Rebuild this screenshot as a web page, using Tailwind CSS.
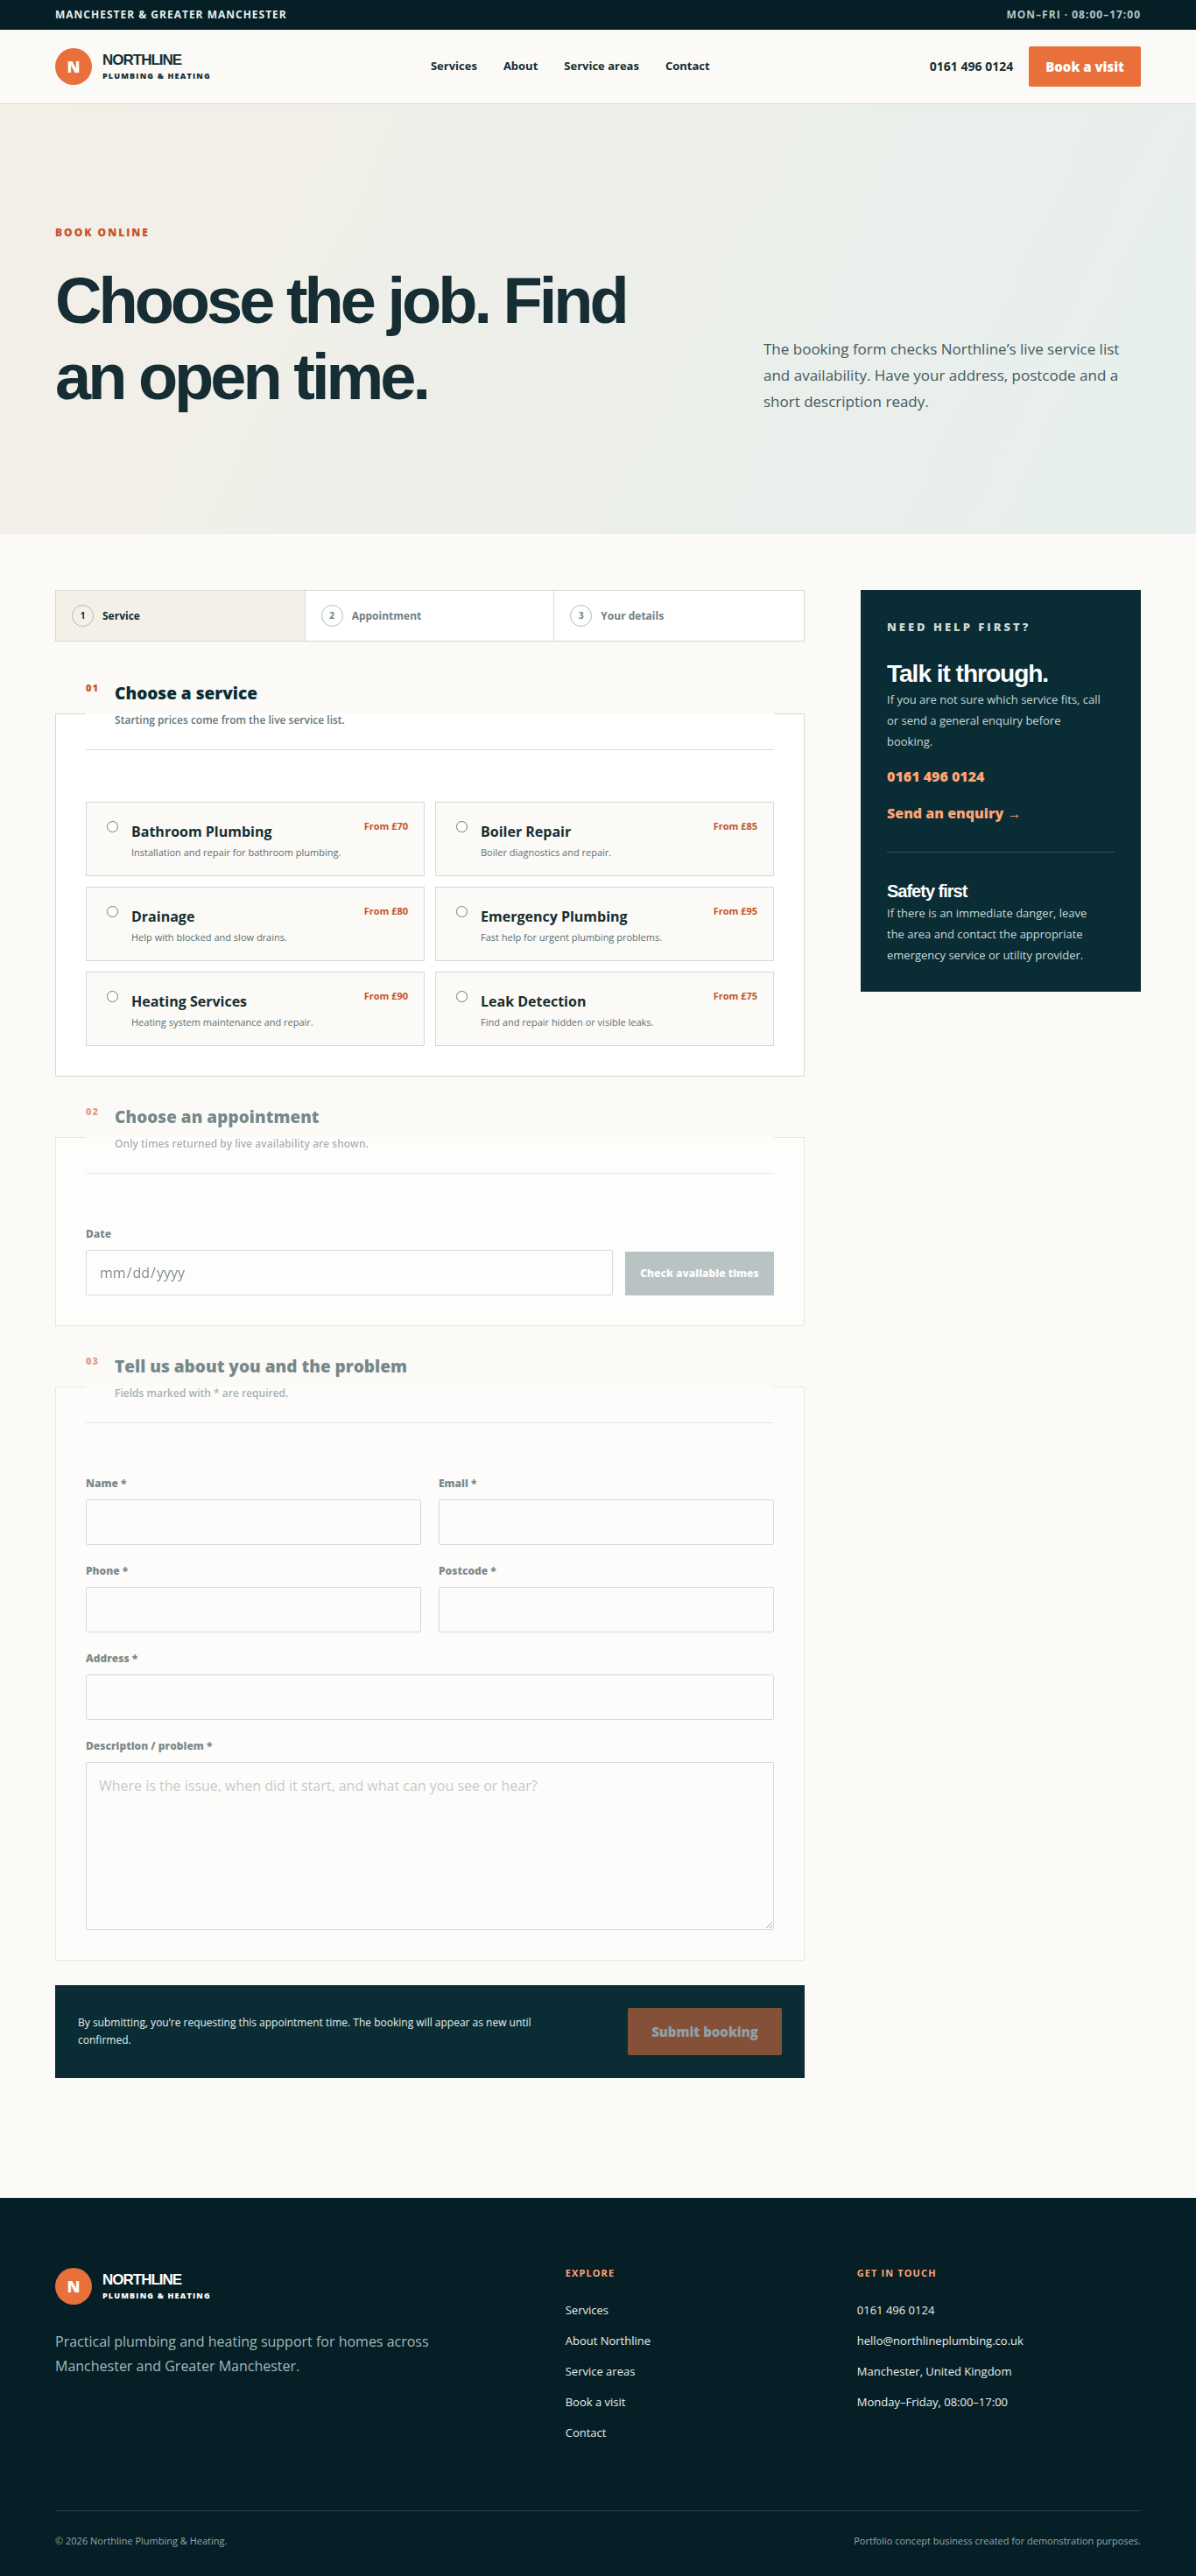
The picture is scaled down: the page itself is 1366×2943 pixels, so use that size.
<!DOCTYPE html>
<html lang="en">
<head>
    <meta charset="UTF-8">
    <meta name="viewport" content="width=device-width, initial-scale=1.0">
    <script src="https://cdn.jsdelivr.net/npm/@tailwindcss/browser@4"></script>
    <title>Book online | Northline Plumbing &amp; Heating</title>
</head>
<body class="bg-[#fbfaf6] text-[#152d33] text-base font-['Open_Sans',sans-serif]">

    <!-- Top bar -->
    <div class="bg-[#061f26]">
        <div class="max-w-[1240px] mx-auto h-[34px] flex items-center justify-between text-xs font-bold uppercase tracking-[1px]">
            <span class="text-[#e6efed]">Manchester &amp; Greater Manchester</span>
            <span class="text-[#b5c8c8]">Mon–Fri · 08:00–17:00</span>
        </div>
    </div>

    <!-- Header -->
    <header class="border-b border-[#d7dfdd]">
        <div class="max-w-[1240px] mx-auto h-[84px] flex items-center justify-between">
            <a href="#" class="flex items-center gap-3">
                <span class="size-[42px] rounded-full bg-[#e96f3b] text-white text-lg font-extrabold flex items-center justify-center">N</span>
                <span class="pt-0.5">
                    <span class="block font-['Liberation_Sans_Narrow','Arial_Narrow','Liberation_Sans',sans-serif] font-bold text-[17px] leading-5 tracking-[-1px]">NORTHLINE</span>
                    <span class="block text-[9px] leading-4 font-extrabold uppercase tracking-[0.13em]">Plumbing &amp; Heating</span>
                </span>
            </a>
            <nav class="flex gap-[30px] text-[13px] font-bold">
                <a href="#">Services</a>
                <a href="#">About</a>
                <a href="#">Service areas</a>
                <a href="#">Contact</a>
            </nav>
            <div class="flex items-center gap-[18px]">
                <a href="#" class="text-sm font-bold">0161 496 0124</a>
                <a href="#" class="h-[46px] px-[19px] rounded-xs bg-[#e96f3b] text-white text-[15px] font-extrabold flex items-center">Book a visit</a>
            </div>
        </div>
    </header>

    <!-- Hero -->
    <section class="bg-linear-115 from-[#f4efe7] to-[#e6efed]">
        <div class="max-w-[1240px] mx-auto pt-[137px] pb-[136px] flex items-end justify-between">
            <div>
                <p class="text-xs leading-5 font-extrabold uppercase tracking-[2px] text-[#c75128]">Book online</p>
                <h1 class="mt-6 max-w-[700px] font-['Liberation_Sans_Narrow','Arial_Narrow','Liberation_Sans',sans-serif] font-bold text-[74px] leading-[87px] tracking-[-4px]">Choose the job. Find an open time.</h1>
            </div>
            <p class="w-[431px] text-[17px] leading-[30px] text-[#435a5f]">The booking form checks Northline’s live service list and availability. Have your address, postcode and a short description ready.</p>
        </div>
    </section>

    <main class="max-w-[1240px] mx-auto pt-16 pb-[137px] flex items-start gap-16">

        <form class="flex-1 min-w-0 flex flex-col gap-7">
            <!-- Steps -->
            <ol class="grid grid-cols-3 mb-[13px] border border-[#d3dcda] bg-white divide-x divide-[#d3dcda] text-xs font-bold text-[#6f8085]">
                <li class="h-[57px] px-[18px] flex items-center gap-2.5 bg-[#f4efe7] text-[#0a2c34]">
                    <span class="size-[25px] rounded-full border border-[#aebdbb] text-[10px] flex items-center justify-center">1</span>
                    Service
                </li>
                <li class="h-[57px] px-[18px] flex items-center gap-2.5">
                    <span class="size-[25px] rounded-full border border-[#aebdbb] text-[10px] flex items-center justify-center">2</span>
                    Appointment
                </li>
                <li class="h-[57px] px-[18px] flex items-center gap-2.5">
                    <span class="size-[25px] rounded-full border border-[#aebdbb] text-[10px] flex items-center justify-center">3</span>
                    Your details
                </li>
            </ol>

            <!-- 01 Service -->
            <fieldset class="min-w-0 border border-[#d3dcda] bg-white px-[34px] pb-[34px] pt-[34px]">
                <legend class="w-full mb-[25px] h-[83px] pt-0.5 border-b border-[#d3dcda] flex items-start gap-[18px]">
                    <span class="text-[11px] leading-5 font-extrabold tracking-widest text-[#c75128]">01</span>
                    <span>
                        <span class="block text-[19px] leading-8 font-extrabold text-[#0a2c34]">Choose a service</span>
                        <span class="block mt-[3px] text-xs leading-6 font-semibold text-[#63757a]">Starting prices come from the live service list.</span>
                    </span>
                </legend>
                <div class="grid grid-cols-2 gap-3">
                    <label class="h-[85px] px-[18px] pt-[17px] border border-[#d3dcda] bg-[#fbfaf6] flex items-start">
                        <input type="radio" name="service" class="mt-1 ml-[5px] mr-[15px] size-[13px]">
                        <span class="flex-1">
                            <span class="block mt-1 text-base leading-6 font-bold">Bathroom Plumbing</span>
                            <span class="block text-[11px] leading-6 text-[#5b6e72]">Installation and repair for bathroom plumbing.</span>
                        </span>
                        <span class="text-[11px] leading-5 font-bold text-[#c75128]">From £70</span>
                    </label>
                    <label class="h-[85px] px-[18px] pt-[17px] border border-[#d3dcda] bg-[#fbfaf6] flex items-start">
                        <input type="radio" name="service" class="mt-1 ml-[5px] mr-[15px] size-[13px]">
                        <span class="flex-1">
                            <span class="block mt-1 text-base leading-6 font-bold">Boiler Repair</span>
                            <span class="block text-[11px] leading-6 text-[#5b6e72]">Boiler diagnostics and repair.</span>
                        </span>
                        <span class="text-[11px] leading-5 font-bold text-[#c75128]">From £85</span>
                    </label>
                    <label class="h-[85px] px-[18px] pt-[17px] border border-[#d3dcda] bg-[#fbfaf6] flex items-start">
                        <input type="radio" name="service" class="mt-1 ml-[5px] mr-[15px] size-[13px]">
                        <span class="flex-1">
                            <span class="block mt-1 text-base leading-6 font-bold">Drainage</span>
                            <span class="block text-[11px] leading-6 text-[#5b6e72]">Help with blocked and slow drains.</span>
                        </span>
                        <span class="text-[11px] leading-5 font-bold text-[#c75128]">From £80</span>
                    </label>
                    <label class="h-[85px] px-[18px] pt-[17px] border border-[#d3dcda] bg-[#fbfaf6] flex items-start">
                        <input type="radio" name="service" class="mt-1 ml-[5px] mr-[15px] size-[13px]">
                        <span class="flex-1">
                            <span class="block mt-1 text-base leading-6 font-bold">Emergency Plumbing</span>
                            <span class="block text-[11px] leading-6 text-[#5b6e72]">Fast help for urgent plumbing problems.</span>
                        </span>
                        <span class="text-[11px] leading-5 font-bold text-[#c75128]">From £95</span>
                    </label>
                    <label class="h-[85px] px-[18px] pt-[17px] border border-[#d3dcda] bg-[#fbfaf6] flex items-start">
                        <input type="radio" name="service" class="mt-1 ml-[5px] mr-[15px] size-[13px]">
                        <span class="flex-1">
                            <span class="block mt-1 text-base leading-6 font-bold">Heating Services</span>
                            <span class="block text-[11px] leading-6 text-[#5b6e72]">Heating system maintenance and repair.</span>
                        </span>
                        <span class="text-[11px] leading-5 font-bold text-[#c75128]">From £90</span>
                    </label>
                    <label class="h-[85px] px-[18px] pt-[17px] border border-[#d3dcda] bg-[#fbfaf6] flex items-start">
                        <input type="radio" name="service" class="mt-1 ml-[5px] mr-[15px] size-[13px]">
                        <span class="flex-1">
                            <span class="block mt-1 text-base leading-6 font-bold">Leak Detection</span>
                            <span class="block text-[11px] leading-6 text-[#5b6e72]">Find and repair hidden or visible leaks.</span>
                        </span>
                        <span class="text-[11px] leading-5 font-bold text-[#c75128]">From £75</span>
                    </label>
                </div>
            </fieldset>

            <!-- 02 Appointment -->
            <fieldset disabled class="min-w-0 border border-[#d3dcda] bg-white px-[34px] pb-[34px] pt-[34px] opacity-55">
                <legend class="w-full mb-[25px] h-[83px] pt-0.5 border-b border-[#d3dcda] flex items-start gap-[18px]">
                    <span class="text-[11px] leading-5 font-extrabold tracking-widest text-[#c75128]">02</span>
                    <span>
                        <span class="block text-[19px] leading-8 font-extrabold text-[#0a2c34]">Choose an appointment</span>
                        <span class="block mt-[3px] text-xs leading-6 font-semibold text-[#63757a]">Only times returned by live availability are shown.</span>
                    </span>
                </legend>
                <div class="flex items-end gap-3.5">
                    <div class="flex-1">
                        <label for="date" class="block mb-2 text-xs leading-5 font-extrabold">Date</label>
                        <input type="date" id="date" class="block w-full h-[52px] px-3.5 border border-[#b5c5c1] rounded-xs bg-white text-base">
                    </div>
                    <button type="button" class="w-[170px] h-[50px] bg-[#0a2c34] text-white text-xs font-extrabold disabled:opacity-50">Check available times</button>
                </div>
            </fieldset>

            <!-- 03 Details -->
            <fieldset disabled class="min-w-0 border border-[#d3dcda] bg-white px-[34px] pb-[34px] pt-[34px] opacity-55">
                <legend class="w-full mb-[25px] h-[83px] pt-0.5 border-b border-[#d3dcda] flex items-start gap-[18px]">
                    <span class="text-[11px] leading-5 font-extrabold tracking-widest text-[#c75128]">03</span>
                    <span>
                        <span class="block text-[19px] leading-8 font-extrabold text-[#0a2c34]">Tell us about you and the problem</span>
                        <span class="block mt-[3px] text-xs leading-6 font-semibold text-[#63757a]">Fields marked with * are required.</span>
                    </span>
                </legend>
                <div class="grid grid-cols-2 gap-5">
                    <div>
                        <label for="name" class="block mb-2 text-xs leading-5 font-extrabold">Name *</label>
                        <input type="text" id="name" class="block w-full h-[52px] px-3.5 border border-[#b5c5c1] rounded-xs bg-white">
                    </div>
                    <div>
                        <label for="email" class="block mb-2 text-xs leading-5 font-extrabold">Email *</label>
                        <input type="email" id="email" class="block w-full h-[52px] px-3.5 border border-[#b5c5c1] rounded-xs bg-white">
                    </div>
                    <div>
                        <label for="phone" class="block mb-2 text-xs leading-5 font-extrabold">Phone *</label>
                        <input type="tel" id="phone" class="block w-full h-[52px] px-3.5 border border-[#b5c5c1] rounded-xs bg-white">
                    </div>
                    <div>
                        <label for="postcode" class="block mb-2 text-xs leading-5 font-extrabold">Postcode *</label>
                        <input type="text" id="postcode" class="block w-full h-[52px] px-3.5 border border-[#b5c5c1] rounded-xs bg-white">
                    </div>
                    <div class="col-span-2">
                        <label for="address" class="block mb-2 text-xs leading-5 font-extrabold">Address *</label>
                        <input type="text" id="address" class="block w-full h-[52px] px-3.5 border border-[#b5c5c1] rounded-xs bg-white">
                    </div>
                    <div class="col-span-2">
                        <label for="problem" class="block mb-2 text-xs leading-5 font-extrabold">Description / problem *</label>
                        <textarea id="problem" placeholder="Where is the issue, when did it start, and what can you see or hear?" class="block w-full h-48 px-3.5 py-3.5 border border-[#b5c5c1] rounded-xs bg-white text-base placeholder:text-[#98a3a6]"></textarea>
                    </div>
                </div>
            </fieldset>

            <!-- Submit -->
            <div class="p-[26px] bg-[#0a2c34] flex items-center justify-between">
                <p class="max-w-[540px] text-xs leading-5 text-[#e6efed]">By submitting, you’re requesting this appointment time. The booking will appear as new until confirmed.</p>
                <button type="submit" disabled class="w-[176px] h-[54px] rounded-xs bg-[#e96f3b] text-white text-[15px] font-extrabold disabled:opacity-55">Submit booking</button>
            </div>
        </form>

        <!-- Help -->
        <aside class="w-80 shrink-0 p-[30px] bg-[#0a2c34] text-[#c8d8d6] text-[13px] leading-6">
            <p class="text-[13px] font-extrabold uppercase tracking-[3px]">Need help first?</p>
            <h2 class="mt-[25px] font-['Liberation_Sans_Narrow','Arial_Narrow','Liberation_Sans',sans-serif] font-bold text-[28px] leading-[34px] tracking-[-1px] text-white">Talk it through.</h2>
            <p class="max-w-[248px]">If you are not sure which service fits, call or send a general enquiry before booking.</p>
            <a href="#" class="block mt-4 text-base font-extrabold text-[#ffa578]">0161 496 0124</a>
            <a href="#" class="block mt-[18px] text-base font-extrabold text-[#ffa578]">Send an enquiry <span class="font-normal">→</span></a>
            <hr class="my-8 border-[#32505a]">
            <h3 class="font-['Liberation_Sans_Narrow','Arial_Narrow','Liberation_Sans',sans-serif] font-bold text-xl leading-[25px] tracking-[-1px] text-white">Safety first</h3>
            <p class="max-w-[248px]">If there is an immediate danger, leave the area and contact the appropriate emergency service or utility provider.</p>
        </aside>
    </main>

    <!-- Footer -->
    <footer class="bg-[#061f26] text-[#e6efed]">
        <div class="max-w-[1240px] mx-auto pt-20">
            <div class="grid grid-cols-[1.6fr_0.83fr_1fr] gap-16">
                <div>
                    <a href="#" class="flex items-center gap-3 text-white">
                        <span class="size-[42px] rounded-full bg-[#e96f3b] text-lg font-extrabold flex items-center justify-center">N</span>
                        <span class="pt-0.5">
                            <span class="block font-['Liberation_Sans_Narrow','Arial_Narrow','Liberation_Sans',sans-serif] font-bold text-[17px] leading-5 tracking-[-1px]">NORTHLINE</span>
                            <span class="block text-[9px] leading-4 font-extrabold uppercase tracking-[0.13em]">Plumbing &amp; Heating</span>
                        </span>
                    </a>
                    <p class="mt-7 max-w-[460px] text-base leading-7 text-[#a3b9b9]">Practical plumbing and heating support for homes across Manchester and Greater Manchester.</p>
                </div>
                <div>
                    <h4 class="text-[11px] leading-3 font-bold uppercase tracking-widest text-[#ffa578]">Explore</h4>
                    <ul class="mt-[26px] flex flex-col gap-[15px] text-[13px] leading-5">
                        <li><a href="#">Services</a></li>
                        <li><a href="#">About Northline</a></li>
                        <li><a href="#">Service areas</a></li>
                        <li><a href="#">Book a visit</a></li>
                        <li><a href="#">Contact</a></li>
                    </ul>
                </div>
                <div>
                    <h4 class="text-[11px] leading-3 font-bold uppercase tracking-widest text-[#ffa578]">Get in touch</h4>
                    <ul class="mt-[26px] flex flex-col gap-[15px] text-[13px] leading-5">
                        <li><a href="#">0161 496 0124</a></li>
                        <li><a href="#">hello@northlineplumbing.co.uk</a></li>
                        <li>Manchester, United Kingdom</li>
                        <li>Monday–Friday, 08:00–17:00</li>
                    </ul>
                </div>
            </div>
            <div class="mt-[79px] pt-6 pb-[30px] border-t border-[#29414a] flex justify-between text-[11px] leading-5 text-[#91a9aa]">
                <span>© 2026 Northline Plumbing &amp; Heating.</span>
                <span>Portfolio concept business created for demonstration purposes.</span>
            </div>
        </div>
    </footer>
</body>
</html>
